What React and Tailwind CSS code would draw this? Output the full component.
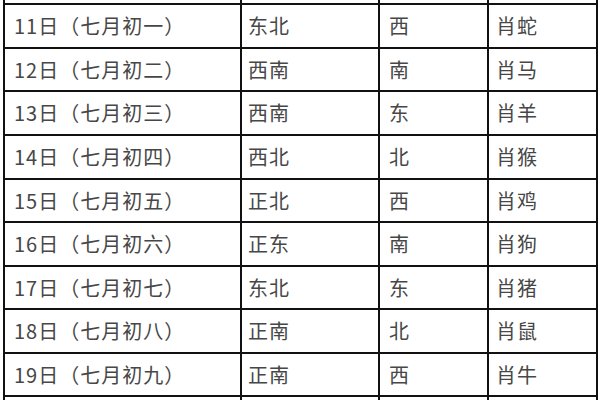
import React from "react";

const rows = [
  ["11日（七月初一）", "东北", "西", "肖蛇"],
  ["12日（七月初二）", "西南", "南", "肖马"],
  ["13日（七月初三）", "西南", "东", "肖羊"],
  ["14日（七月初四）", "西北", "北", "肖猴"],
  ["15日（七月初五）", "正北", "西", "肖鸡"],
  ["16日（七月初六）", "正东", "南", "肖狗"],
  ["17日（七月初七）", "东北", "东", "肖猪"],
  ["18日（七月初八）", "正南", "北", "肖鼠"],
  ["19日（七月初九）", "正南", "西", "肖牛"],
];

const heights = ["h-[44px]", "h-[43px]", "h-[44px]", "h-[44px]", "h-[43px]", "h-[44px]", "h-[43px]", "h-[44px]", "h-[43px]"];
const widths = ["w-[237px]", "w-[138px]", "w-[109px]", "w-[109px]"];
const pads = ["pl-[9px]", "pl-[6px]", "pl-[9px]", "pl-[7px]"];

export default function App() {
  return (
    <div className="w-[600px] h-[400px] bg-white overflow-hidden pl-[3px]">
      <div
        className="flex flex-col border-l-2 border-[#111] w-[595px] text-[20px] text-[#474747]"
        style={{ fontFamily: '"Noto Sans CJK SC", "Noto Sans", sans-serif' }}
      >
        <div className="flex h-[5px]">
          {widths.map((w, j) => (
            <div key={j} className={`${w} shrink-0 border-r-2 border-b-2 border-[#111]`} />
          ))}
        </div>
        {rows.map((r, i) => (
          <div key={i} className={`flex ${heights[i]}`}>
            {r.map((c, j) => (
              <div
                key={j}
                className={`${widths[j]} ${pads[j]} shrink-0 flex items-center border-r-2 border-b-2 border-[#111] leading-none tracking-[1px]`}
              >
                {c}
              </div>
            ))}
          </div>
        ))}
        <div className="flex h-[4px]">
          {widths.map((w, j) => (
            <div key={j} className={`${w} shrink-0 border-r-2 border-[#111]`} />
          ))}
        </div>
      </div>
    </div>
  );
}
